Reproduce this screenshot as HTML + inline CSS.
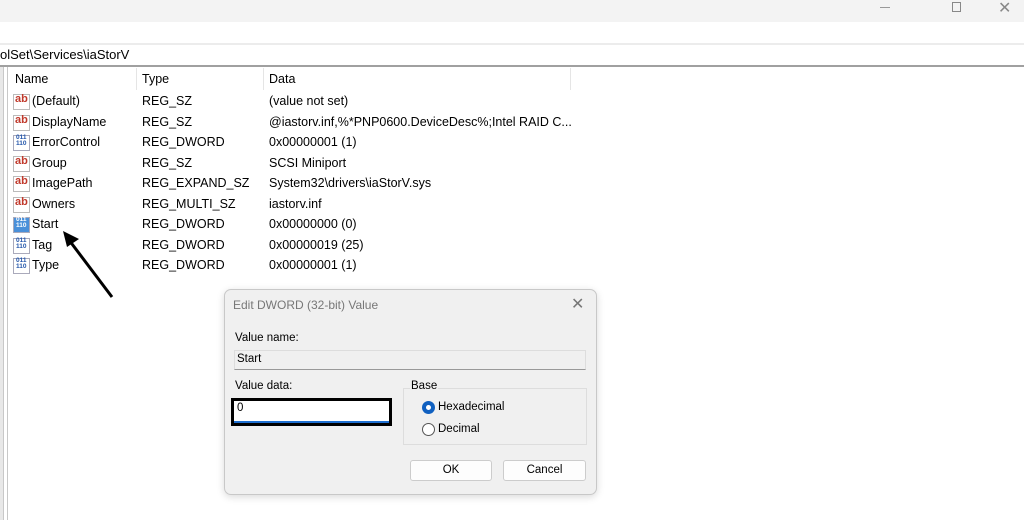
<!DOCTYPE html>
<html><head><meta charset="utf-8"><style>
*{margin:0;padding:0;box-sizing:border-box}
body{width:1024px;height:520px;overflow:hidden;background:#fff;font-family:"Liberation Sans",sans-serif;position:relative;color:#000}
.abs{position:absolute}
.t{font-size:12.5px;white-space:nowrap}
.ic{position:absolute;left:13px;width:17px;height:16px}
.d{font-size:11.5px;color:#000;white-space:nowrap}
</style></head><body>
<div class="abs" style="left:0;top:0;width:1024px;height:22px;background:#f3f3f3"></div>
<div class="abs" style="left:880px;top:7px;width:10px;height:1px;background:#999"></div>
<div class="abs" style="left:952px;top:2px;width:9px;height:10px;border:1px solid #888"></div>
<div class="abs" style="left:998px;top:-2px;font-size:16px;color:#888">✕</div>
<div class="abs" style="left:0;top:43px;width:1024px;height:2px;background:#ececec"></div>
<div class="abs t" style="left:0;top:47px;font-size:13px">olSet\Services\iaStorV</div>
<div class="abs" style="left:0;top:65px;width:1024px;height:2px;background:#a0a0a0"></div>
<div class="abs" style="left:0;top:67px;width:3px;height:453px;background:#e8e8e8"></div>
<div class="abs" style="left:3px;top:67px;width:1px;height:453px;background:#c8c8c8"></div>
<div class="abs" style="left:7px;top:67px;width:1px;height:453px;background:#c8c8c8"></div>
<div class="abs" style="left:136px;top:68px;width:1px;height:22px;background:#e5e5e5"></div>
<div class="abs" style="left:263px;top:68px;width:1px;height:22px;background:#e5e5e5"></div>
<div class="abs" style="left:570px;top:68px;width:1px;height:22px;background:#e5e5e5"></div>
<div class="abs t" style="left:15px;top:72px">Name</div>
<div class="abs t" style="left:142px;top:72px">Type</div>
<div class="abs t" style="left:269px;top:72px">Data</div>
<div id="rows"></div>
<script>
var r=[["ab","(Default)","REG_SZ","(value not set)"],["ab","DisplayName","REG_SZ","@iastorv.inf,%*PNP0600.DeviceDesc%;Intel RAID C..."],["b","ErrorControl","REG_DWORD","0x00000001 (1)"],["ab","Group","REG_SZ","SCSI Miniport"],["ab","ImagePath","REG_EXPAND_SZ","System32\\drivers\\iaStorV.sys"],["ab","Owners","REG_MULTI_SZ","iastorv.inf"],["s","Start","REG_DWORD","0x00000000 (0)"],["b","Tag","REG_DWORD","0x00000019 (25)"],["b","Type","REG_DWORD","0x00000001 (1)"]];
var h="";r.forEach(function(x,i){var y=93+i*20.5;
var ic=x[0]=="ab"?'<div class="ic" style="top:'+(y+1)+'px;border:1px solid #bbb;background:#fff"><span style="position:absolute;left:1px;top:-2px;font-size:11px;font-weight:bold;color:#c0392b">ab</span></div>':
'<div class="ic" style="top:'+(y+1)+'px;border:1px solid #aab;background:'+(x[0]=="s"?'#4a90d9':'#fff')+'"><span style="position:absolute;left:2px;top:-1px;font-size:6.5px;line-height:6px;font-weight:bold;color:'+(x[0]=="s"?'#fff':'#2255aa')+'">011<br>110</span></div>';
h+=ic+'<div class="abs t" style="left:32px;top:'+(y+1)+'px">'+x[1]+'</div><div class="abs t" style="left:142px;top:'+(y+1)+'px">'+x[2]+'</div><div class="abs t" style="left:269px;top:'+(y+1)+'px">'+x[3]+'</div>';});
document.getElementById("rows").innerHTML=h;
</script>
<svg class="abs" style="left:55px;top:225px" width="70" height="80"><line x1="57" y1="72" x2="14" y2="15" stroke="#000" stroke-width="3"/><polygon points="8,6 24,14 12,22" fill="#000"/></svg>
<div class="abs" style="left:224px;top:289px;width:373px;height:206px;background:#f0f0f0;border:1px solid #c8c8c8;border-radius:7px;box-shadow:0 2px 8px rgba(0,0,0,.15)">
<div class="abs d" style="left:8px;top:8px;font-size:12px;color:#777">Edit DWORD (32-bit) Value</div>
<div class="abs" style="left:346px;top:4px;font-size:16px;color:#777">✕</div>
<div class="abs d" style="left:10px;top:42px">Value name:</div>
<div class="abs" style="left:9px;top:60px;width:352px;height:20px;background:#f0f0f0;border:1px solid #ddd;border-bottom:1px solid #999"></div>
<div class="abs d" style="left:12px;top:63px">Start</div>
<div class="abs d" style="left:10px;top:90px">Value data:</div>
<div class="abs" style="left:6px;top:108px;width:161px;height:28px;border:3px solid #000;background:#fff"></div>
<div class="abs" style="left:9px;top:131px;width:155px;height:2px;background:#1e6fd0"></div>
<div class="abs d" style="left:12px;top:112px">0</div>
<div class="abs" style="left:178px;top:98px;width:184px;height:57px;border:1px solid #ddd"></div>
<div class="abs d" style="left:185px;top:90px;background:#f0f0f0;padding:0 1px">Base</div>
<div class="abs" style="left:197px;top:111px;width:13px;height:13px;border-radius:50%;background:#1060c0"></div>
<div class="abs" style="left:201px;top:115px;width:5px;height:5px;border-radius:50%;background:#fff"></div>
<div class="abs d" style="left:213px;top:111px">Hexadecimal</div>
<div class="abs" style="left:197px;top:133px;width:13px;height:13px;border-radius:50%;border:1px solid #555;background:#fff"></div>
<div class="abs d" style="left:213px;top:133px">Decimal</div>
<div class="abs" style="left:185px;top:170px;width:82px;height:21px;background:#fdfdfd;border:1px solid #ccc;border-radius:3px;text-align:center;font-size:11.5px;line-height:19px">OK</div>
<div class="abs" style="left:278px;top:170px;width:83px;height:21px;background:#fdfdfd;border:1px solid #ccc;border-radius:3px;text-align:center;font-size:11.5px;line-height:19px">Cancel</div>
</div>
</body></html>
